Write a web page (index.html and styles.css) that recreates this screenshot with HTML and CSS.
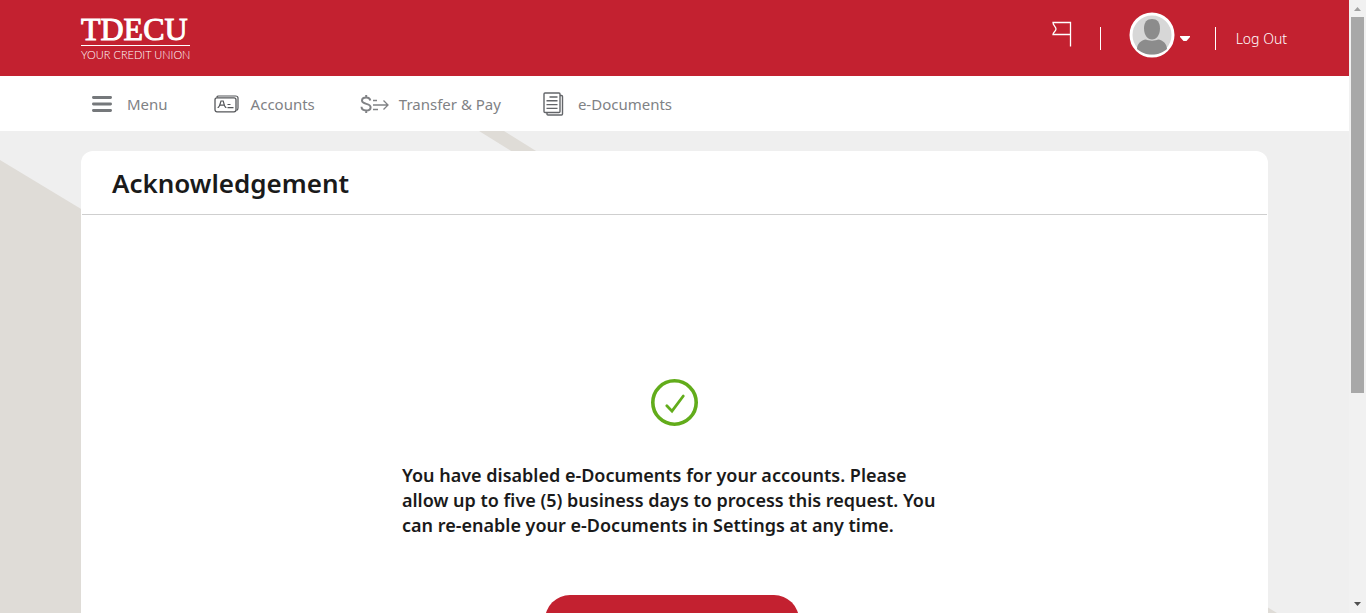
FILE: index.html
```html
<!DOCTYPE html>
<html lang="en">
<head>
<meta charset="utf-8">
<meta name="viewport" content="width=device-width, initial-scale=1">
<title>Acknowledgement</title>
<link rel="stylesheet" href="styles.css">
</head>
<body>
<div class="shell">
  <div class="page">
    <header class="header">
      <a class="logo" href="#" aria-label="TDECU Your Credit Union">
        <span class="logo-name">TDECU</span>
        <span class="logo-tagline">YOUR CREDIT UNION</span>
      </a>
      <div class="tools">
        <a class="flag" href="#" aria-label="Notifications">
          <svg width="22" height="28" viewBox="0 0 22 28" fill="none" stroke="#fff" stroke-width="1.3"><path d="M19.500 26.500V2.500H2c0 3 3 4 3 6.500S2 12 2 14.500h17.500"/></svg>
        </a>
        <span class="divider"></span>
        <button class="profile" type="button" aria-label="Profile menu">
          <svg width="46" height="46" viewBox="0 0 46 46">
            <circle cx="23" cy="23" r="21" fill="#d7d7d7" stroke="#fff" stroke-width="3"/>
            <path d="M23 7c5 0 8 3 8 9.500S27.500 27.500 23 27.500 15 23 15 16.500 18 7 23 7z" fill="#8c8c8c"/>
            <path d="M8 37c0-5 4-9 9-9.500 2 1.500 10 1.500 12 0 5 .5 9 4.500 9 9.500-4 3.500-8.500 5.500-15 5.500S12 40.500 8 37z" fill="#8c8c8c"/>
          </svg>
          <svg width="10" height="6" viewBox="0 0 10 6"><path d="M0 0h10v1L6.500 5h-3L0 1z" fill="#fff"/></svg>
        </button>
        <span class="divider"></span>
        <a class="logout" href="#">Log Out</a>
      </div>
    </header>
    <nav class="nav" aria-label="Main">
      <button class="nav-item nav-menu" type="button">
        <svg width="20" height="16" viewBox="0 0 20 16" fill="none" stroke="#75787b" stroke-width="2.800" stroke-linecap="round"><path d="M1.400 1.500h17.200M1.400 8h17.200M1.400 14.500h17.200"/></svg>
        Menu
      </button>
      <a class="nav-item nav-accounts" href="#">
        <svg width="25" height="18" viewBox="0 0 25 18" fill="none" stroke="#55575a"><path d="M3 2.500V2Q3 1 4.500 1h17Q24 1 24 3v10Q24 15 22.500 15.500" stroke-width="1.200"/><rect x="1" y="2.800" width="21" height="14" rx="2" stroke-width="1.300"/><path d="M4 13c0-1 1.200-1 1.500-2.300L7 6h2.200l1.300 4.700C10.800 12 12 12 12 13M5.800 10.200h4.500M13.500 9.500h3M13.500 12.700h6" stroke-width="1.200"/></svg>
        Accounts
      </a>
      <a class="nav-item nav-transfer" href="#">
        <svg width="29" height="20" viewBox="0 0 29 20" fill="none" stroke="#808285"><path d="M10.300 6.500C10 4.300 8.500 3.500 6.200 3.500 3.600 3.500 2 4.700 2 6.600c0 4.400 8.600 2.200 8.600 6.600 0 2-1.700 3.300-4.500 3.300-2.700 0-4.500-1.200-4.600-3.700M6.200 1v2.500M6.200 16.500V19" stroke-width="2"/><path d="M13 6.500h4M13 11h15M13 15.500h5M23.500 6.500 28 11l-4.500 4.500" stroke-width="1.300"/></svg>
        Transfer &amp; Pay
      </a>
      <a class="nav-item nav-documents" href="#">
        <svg width="21" height="24" viewBox="0 0 21 24" fill="none" stroke="#636569" stroke-width="1.400"><path d="M17 3.500h1.500q1 0 1 1v17.500q0 1-1 1H5q-1 0-1-1v-1.500"/><rect x="1" y="1" width="16" height="19.500" rx="1"/><path d="M6.500 5h8M3.500 8.800h11M3.500 12.600h11M3.500 16.400h11"/></svg>
        e-Documents
      </a>
    </nav>
    <main class="main">
      <svg class="backdrop" viewBox="0 0 1349 482" preserveAspectRatio="none" aria-hidden="true"><path d="M0 29 750 482H0zM479 0h25l773 482h-25z" fill="#dfdcd7"/></svg>
      <section class="card">
        <h1 class="card-title">Acknowledgement</h1>
        <div class="card-body">
          <svg class="check" width="47" height="47" viewBox="0 0 47 47" fill="none" stroke="#62ac1b"><circle cx="23.500" cy="23.500" r="21.700" stroke-width="3.600"/><path d="m15.800 26.800 5.200 5.400L32.300 17" stroke-width="2.800" stroke-linecap="round"/></svg>
          <p class="message">You have disabled e-Documents for your accounts. Please allow up to five (5) business days to process this request. You can re-enable your e-Documents in Settings at any time.</p>
          <button class="primary" type="button" aria-label="Continue"></button>
        </div>
      </section>
    </main>
  </div>
  <div class="scrollbar" aria-hidden="true">
    <svg width="7" height="4" viewBox="0 0 7 4"><path d="M0 4h7L3.500 0z" fill="#a0a0a0"/></svg>
    <span class="track"><span class="thumb"></span></span>
    <svg width="7" height="4" viewBox="0 0 7 4"><path d="M0 0h7L3.500 4z" fill="#505050"/></svg>
  </div>
</div>
</body>
</html>
```
FILE: styles.css
```css
* { box-sizing: border-box; }
body {
  margin: 0;
  font-family: "Noto Sans", "Open Sans", sans-serif;
  color: #1a1a1a;
}
button {
  border: 0;
  padding: 0;
  background: none;
  font: inherit;
  cursor: pointer;
}
a { color: inherit; text-decoration: none; }
svg { display: block; flex-shrink: 0; }

.shell {
  display: grid;
  grid-template-columns: minmax(0, 1fr) 17px;
  height: 100vh;
  overflow: hidden;
}
.page {
  display: flex;
  flex-direction: column;
  min-height: 0;
}
.header {
  display: flex;
  flex-shrink: 0;
  justify-content: space-between;
  height: 76px;
  padding: 0 62px 0 6%;
  background: #c32130;
  color: #fff;
}
.logo { padding-top: 14px; }
.logo-name {
  display: block;
  border-bottom: 1px solid #fff;
  font-family: "Liberation Serif", serif;
  font-size: 32px;
  line-height: 31px;
  -webkit-text-stroke: 1px #fff;
}
.logo-tagline {
  display: block;
  font-family: Lato, sans-serif;
  font-size: 11px;
  font-weight: 300;
  line-height: 18px;
}
.tools {
  display: flex;
  align-items: center;
}
.flag { margin: 0 27px 8px 0; }
.divider {
  width: 1px;
  height: 23px;
  background: #fff;
}
.profile {
  display: flex;
  align-items: center;
  gap: 5px;
  margin: 0 25px 6px 28px;
}
.profile svg + svg { margin-top: 8px; }
.logout {
  margin-left: 20px;
  font-size: 14px;
  font-weight: 300;
}
.nav {
  display: flex;
  flex-shrink: 0;
  align-items: center;
  height: 55px;
  padding-left: 92px;
  background: #fff;
  color: #808285;
  font-size: 15px;
}
.nav-item {
  display: flex;
  align-items: center;
  color: #808285;
}
.nav-menu { gap: 15px; margin-right: 46px; }
.nav-accounts { gap: 12px; margin-right: 45px; }
.nav-transfer { gap: 10px; margin-right: 42px; }
.nav-documents { gap: 14px; }
.main {
  position: relative;
  flex: 1;
  min-height: 0;
  padding: 20px 6% 0;
  background: #efefef;
}
.backdrop {
  position: absolute;
  inset: 0;
  width: 100%;
  height: 100%;
}
.card {
  position: relative;
  border-radius: 12px;
  background: #fff;
}
.card-title {
  margin: 0 1px;
  padding: 12px 30px 11px;
  border-bottom: 1px solid #cfcfcf;
  font-size: 26px;
  line-height: 40px;
  font-weight: 600;
}
.card-body {
  display: flex;
  flex-direction: column;
  align-items: center;
  padding: 164px 24px 60px;
}
.message {
  max-width: 545px;
  margin: 37px 0 57px;
  font-size: 18px;
  line-height: 25px;
  font-weight: 600;
}
.primary {
  width: 254px;
  height: 50px;
  margin-right: 5px;
  border-radius: 25px;
  background: #c32130;
}
.scrollbar {
  display: flex;
  flex-direction: column;
  align-items: center;
  padding: 7px 0;
  background: #f1f1f1;
}
.track {
  flex: 1;
  width: 13px;
  margin: 6px 0;
}
.thumb {
  display: block;
  height: 65%;
  background: #a8a8a8;
}
```
